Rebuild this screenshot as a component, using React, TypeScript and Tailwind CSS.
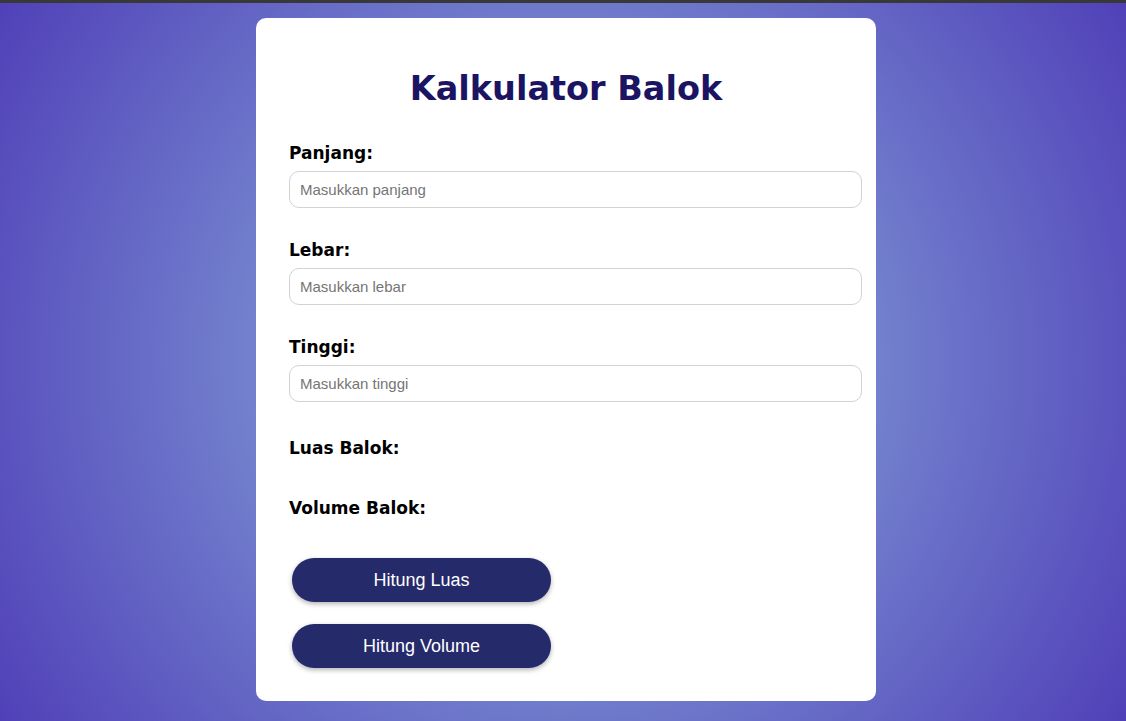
import { useState } from "react";

const heading = { fontFamily: '"DejaVu Sans", "Open Sans", sans-serif' };
const body = { fontFamily: '"Liberation Sans", Arial, sans-serif' };

// one labelled number field
const Field = ({
  label,
  placeholder,
  value,
  onChange,
}: {
  label: string;
  placeholder: string;
  value: string;
  onChange: (v: string) => void;
}) => (
  <div className="mb-[31px]">
    <label className="block text-[17px] leading-[22px] font-bold text-black mb-[7px]" style={heading}>
      {label}
    </label>
    <input
      type="number"
      value={value}
      onChange={(e) => onChange(e.target.value)}
      placeholder={placeholder}
      className="w-[573px] h-[37px] px-[10px] rounded-[10px] border border-[#d2d2d2] bg-white text-[15px] text-black placeholder:text-[#757575] outline-none"
      style={body}
    />
  </div>
);

export default function App() {
  const [panjang, setPanjang] = useState("");
  const [lebar, setLebar] = useState("");
  const [tinggi, setTinggi] = useState("");
  const [luas, setLuas] = useState("");
  const [volume, setVolume] = useState("");

  const p = parseFloat(panjang);
  const l = parseFloat(lebar);
  const t = parseFloat(tinggi);

  const hitungLuas = () => {
    if (isNaN(p) || isNaN(l) || isNaN(t)) return;
    setLuas(String(2 * (p * l + p * t + l * t)));
  };

  const hitungVolume = () => {
    if (isNaN(p) || isNaN(l) || isNaN(t)) return;
    setVolume(String(p * l * t));
  };

  return (
    <div className="min-h-screen flex flex-col bg-[radial-gradient(circle,#819bd6_0%,#7a8fd2_35%,#5040b8_100%)]">
      <div className="h-[3px] bg-[#383838]" />
      <div className="flex justify-center pl-[6px] pt-[15px] pb-[20px]">
        <div className="w-[620px] bg-white rounded-[10px] pl-[33px] pr-[14px] pt-[50px] pb-[33px]">
          <h1 className="text-center text-[33.5px] leading-[42px] font-bold text-[#1b1462] pr-[19px] mb-[32px]" style={heading}>
            Kalkulator Balok
          </h1>

          <Field label="Panjang:" placeholder="Masukkan panjang" value={panjang} onChange={setPanjang} />
          <Field label="Lebar:" placeholder="Masukkan lebar" value={lebar} onChange={setLebar} />
          <Field label="Tinggi:" placeholder="Masukkan tinggi" value={tinggi} onChange={setTinggi} />

          <p className="text-[17px] leading-[22px] font-bold text-black mt-[35px] mb-[38px]" style={heading}>
            Luas Balok: <span className="font-normal">{luas}</span>
          </p>
          <p className="text-[17px] leading-[22px] font-bold text-black mb-[39px]" style={heading}>
            Volume Balok: <span className="font-normal">{volume}</span>
          </p>

          <div className="flex flex-col gap-[22px] pl-[3px]">
            <button
              onClick={hitungLuas}
              className="w-[259px] h-[44px] rounded-full bg-[#252a6b] text-white text-[18px] shadow-[0_2px_5px_rgba(0,0,0,0.3)]"
              style={body}
            >
              Hitung Luas
            </button>
            <button
              onClick={hitungVolume}
              className="w-[259px] h-[44px] rounded-full bg-[#252a6b] text-white text-[18px] shadow-[0_2px_5px_rgba(0,0,0,0.3)]"
              style={body}
            >
              Hitung Volume
            </button>
          </div>
        </div>
      </div>
    </div>
  );
}
